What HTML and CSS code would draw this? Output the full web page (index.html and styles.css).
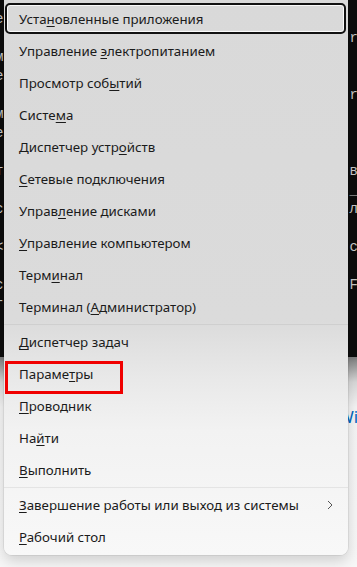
FILE: index.html
```html
<!DOCTYPE html>
<html lang="ru">
<head>
<meta charset="utf-8">
<title>Меню</title>
<link rel="stylesheet" href="styles.css">
</head>
<body>
<div class="desktop">
  <div class="term">
    <div class="tline"><span>е</span><span></span></div>
    <div class="tline"><span></span><span>r</span></div>
    <div class="tline"><span>м</span><span></span></div>
    <div class="tline"><span>е</span><span></span></div>
    <div class="tline"><span></span><span>r</span></div>
    <div class="tline"><span>м</span><span></span></div>
    <div class="tline"><span>е</span><span></span></div>
    <div class="tline"><span></span><span></span></div>
    <div class="tline"><span>т</span><span>в</span></div>
    <div class="tline"><span></span><span>_</span></div>
    <div class="tline"><span>с</span><span>л</span></div>
    <div class="tline"><span></span><span></span></div>
    <div class="tline"><span>&lt;</span><span>с</span></div>
    <div class="tline"><span></span><span></span></div>
    <div class="tline"><span>с</span><span>F</span></div>
    <div class="tline"><span>r</span><span></span></div>
  </div>
  <div class="below">
    <div class="link-line">Windows</div>
  </div>

  <nav class="menu">
    <div class="group">
      <div class="item focus"><span class="label">Уста<u>н</u>овленные приложения</span></div>
      <div class="item"><span class="label">Управление <u>э</u>лектропитанием</span></div>
      <div class="item"><span class="label">Просмотр соб<u>ы</u>тий</span></div>
      <div class="item"><span class="label">Систе<u>м</u>а</span></div>
      <div class="item"><span class="label">Диспетчер устр<u>о</u>йств</span></div>
      <div class="item"><span class="label"><u>С</u>етевые подключения</span></div>
      <div class="item"><span class="label">Управ<u>л</u>ение дисками</span></div>
      <div class="item"><span class="label"><u>У</u>правление компьютером</span></div>
      <div class="item"><span class="label">Терм<u>и</u>нал</span></div>
      <div class="item"><span class="label">Терминал (<u>А</u>дминистратор)</span></div>
    </div>
    <div class="sep"></div>
    <div class="group">
      <div class="item"><span class="label"><u>Д</u>испетчер задач</span></div>
      <div class="item marked"><span class="label">Параме<u>т</u>ры</span><span class="redbox"></span></div>
      <div class="item"><span class="label"><u>П</u>роводник</span></div>
      <div class="item"><span class="label">На<u>й</u>ти</span></div>
      <div class="item"><span class="label"><u>В</u>ыполнить</span></div>
    </div>
    <div class="sep sep-light"></div>
    <div class="group">
      <div class="item sub"><span class="label"><u>З</u>авершение работы или выход из системы</span>
        <svg class="chev" width="8" height="12" viewBox="0 0 8 12"><path d="M2 2 L6 6 L2 10" fill="none" stroke="#555" stroke-width="1"/></svg>
      </div>
      <div class="item"><span class="label"><u>Р</u>абочий стол</span></div>
    </div>
  </nav>
</div>
</body>
</html>
```

FILE: styles.css
```css
* { box-sizing: border-box; }
html, body { margin: 0; padding: 0; }
body {
  width: 357px;
  height: 567px;
  overflow: hidden;
  font-family: "Noto Sans", "Open Sans", sans-serif;
  background: #f6f6f6;
}
.desktop {
  position: relative;
  width: 357px;
  height: 567px;
  display: flex;
  flex-direction: column;
}
.term {
  height: 357px;
  background: #0c0c0c;
  color: #c8c8c8;
  font-family: "Liberation Mono", monospace;
  font-size: 14px;
  padding-top: 10px;
}
.tline {
  height: 19px;
  line-height: 19px;
  display: flex;
  justify-content: space-between;
}
.tline span:first-child { margin-left: -5px; }
.tline span:last-child { margin-right: -1px; }
.below {
  flex: 1;
  background: linear-gradient(to bottom, #7c7c7c 0, #d8d8d8 25px, #f4f4f4 50px, #f7f7f7 100%);
  padding-top: 50px;
}
.link-line {
  padding-left: 338px;
  white-space: nowrap;
  overflow: hidden;
  color: #0067c0;
  font-family: "Noto Sans", sans-serif;
  font-size: 17px;
  line-height: 20px;
}
.menu {
  position: absolute;
  left: 4px;
  top: 0;
  width: 344px;
  padding: 3px 0 2px;
  border-radius: 0 0 8px 8px;
  background: linear-gradient(to bottom, #d9d9d9 0, #dbdbdb 320px, #e9e9e9 380px, #f2f2f2 430px, #f8f8f8 555px);
  box-shadow: 0 6px 14px rgba(0,0,0,0.16), 0 0 0 1px rgba(0,0,0,0.06);
  color: #1b1b1b;
  font-size: 13.3px;
}
.group { display: flex; flex-direction: column; }
.item {
  position: relative;
  height: 32px;
  margin: 0 2px 0 1px;
  padding: 0 12px;
  display: flex;
  align-items: center;
  white-space: nowrap;
  border: 2px solid transparent;
  border-radius: 5px;
}
.label { white-space: pre; }
.item u { text-decoration-thickness: 1px; text-underline-offset: 2px; }
.item.focus {
  height: 31px;
  margin-bottom: 1px;
  border-color: #111;
  box-shadow: inset 0 0 0 1px rgba(255,255,255,0.85);
}
.sep {
  height: 1px;
  margin: 1px 0;
  background: #cfcfcf;
}
.sep-light { background: #e4e4e4; }
.sub { justify-content: space-between; }
.chev { margin-right: -2px; }
.redbox {
  position: absolute;
  left: -2px;
  top: 1px;
  width: 118px;
  height: 33px;
  border: 3px solid #f00000;
}
```
